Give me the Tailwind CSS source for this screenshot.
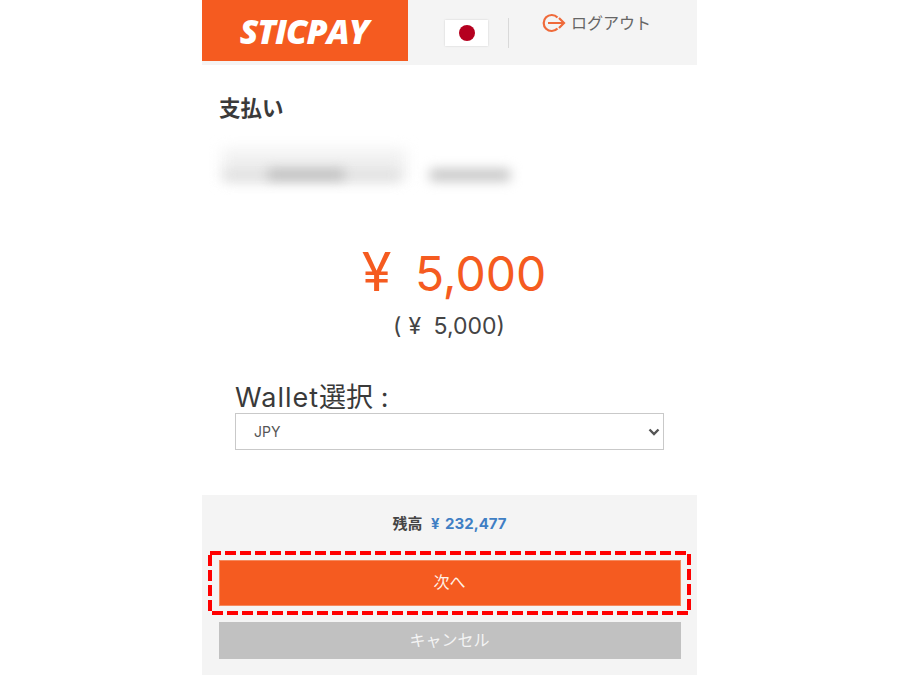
<!DOCTYPE html>
<html lang="ja">
    <head>
        <meta charset="UTF-8" />
        <meta name="viewport" content="width=device-width, initial-scale=1.0" />
        <title>STICPAY</title>
        <script src="https://cdn.jsdelivr.net/npm/@tailwindcss/browser@4"></script>
    </head>
    <body class="bg-white h-[675px] overflow-hidden font-['Inter','Noto_Sans_CJK_JP',sans-serif] text-[#3a3a3a]">
        <div class="ml-[202px] w-[495px] h-[675px] flex flex-col">
            <!-- header -->
            <header class="h-[65px] bg-[#f4f4f4] flex items-start shrink-0">
                <div class="w-[206px] h-[61px] bg-[#f55b20] flex items-center justify-center">
                    <span class="font-['Open_Sans',sans-serif] italic font-extrabold text-[34px] leading-none tracking-[-1px] text-white pr-[2px]">STICPAY</span>
                </div>
                <div class="ml-[37px] mt-[20px] w-[43px] h-[26px] bg-white shadow-[0_0_2px_rgba(0,0,0,0.15)] flex items-center justify-center">
                    <span class="block w-4 h-4 rounded-full bg-[#b5001f]"></span>
                </div>
                <div class="ml-[20px] mt-[18px] w-px h-[30px] bg-[#d9d9d9]"></div>
                <div class="ml-[32px] mt-[13px] flex items-center gap-[5px]">
                    <svg width="25" height="20" viewBox="0 0 25 20" fill="none" stroke="#ef6a3a" stroke-width="2.2">
                        <path d="M16.5 4.5A8 8 0 1 0 16.5 15.5" />
                        <path d="M7 10H23M18 5L23 10L18 15" />
                    </svg>
                    <span class="text-[16px] leading-5 text-[#666]">ログアウト</span>
                </div>
            </header>

            <!-- payment info -->
            <main class="flex-1 flex flex-col">
                <h1 class="ml-[17px] mt-[31px] text-[21.5px] leading-6 font-bold text-[#3a3a3a]">支払い</h1>
                <div class="ml-[18px] mt-[25px] h-[46px] relative">
                    <div class="absolute left-[2px] top-[4px] w-[184px] h-[32px] bg-[#f1f1f1] blur-[7px]"></div>
                    <div class="absolute left-[4px] top-[24px] w-[176px] h-[12px] bg-[#e0e0e0] blur-[6px]"></div>
                    <div class="absolute left-[48px] top-[25px] w-[76px] h-[9px] bg-[#b8b8b8] blur-[6px]"></div>
                    <div class="absolute left-[210px] top-[24px] w-[80px] h-[12px] bg-[#c4c4c4] blur-[6px]"></div>
                </div>

                <p class="mt-[54px] text-center text-[48px] leading-[56px] text-[#f55b20] [word-spacing:10px] pl-[9px]"><span class="text-[54px] leading-none">¥</span> 5,000</p>
                <p class="mt-[9px] text-center text-[23px] leading-[30px] text-[#444] [word-spacing:6px] pr-[1px]"><span class="mr-[7px]">(</span>¥ 5,000)</p>

                <div class="ml-[33px] w-[429px] mt-[42px]">
                    <label class="block text-[27px] leading-[30px] text-[#3a3a3a]"><span class="tracking-[1px]">Wallet</span>選択 :</label>
                    <div class="h-[37px] border-[1.5px] border-[#c9c9c9] bg-white flex items-center justify-between pl-[18px] pr-[3px]">
                        <span class="text-[14px] text-[#555]">JPY</span>
                        <svg width="12" height="8" viewBox="0 0 12 8" fill="none" stroke="#555" stroke-width="2.4">
                            <path d="M1.5 1.5L6 6L10.5 1.5" />
                        </svg>
                    </div>
                </div>
            </main>

            <!-- balance and buttons -->
            <footer class="h-[180px] shrink-0 bg-[#f4f4f4] flex flex-col items-center pt-[20px]">
                <p class="text-[15px] leading-[18px] font-bold text-[#444] [word-spacing:2px]">残高 <span class="text-[#3f7fc4] ml-[3px]">¥ 232,477</span></p>
                <div class="relative mt-[18px] w-[483px] h-[64px] flex items-center justify-center">
                    <button class="w-[462px] h-[46px] pb-[2px] border border-[#f58a5e] bg-[#f55b20] text-[#fff3e8] text-[16px]">次へ</button>
                    <!-- highlight frame drawn over the button -->
                    <svg class="absolute inset-0 pointer-events-none" width="483" height="64" fill="none">
                        <rect x="2" y="2" width="479" height="60" stroke="#ff0000" stroke-width="4" stroke-dasharray="11 4" />
                    </svg>
                </div>
                <button class="mt-[7px] w-[462px] h-[37px] pb-[2px] bg-[#c1c1c1] text-[#f4f4f4] text-[16px]">キャンセル</button>
            </footer>
        </div>
    </body>
</html>
